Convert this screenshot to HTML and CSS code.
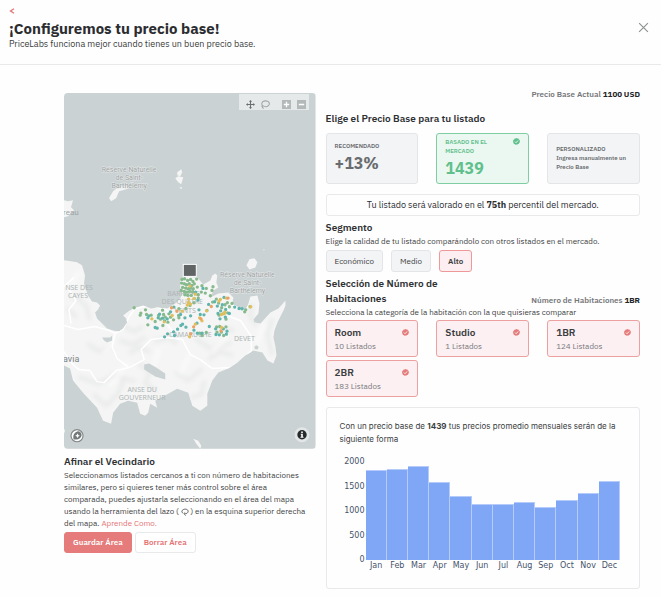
FILE: index.html
```html
<!DOCTYPE html>
<html lang="es">
<head>
    <meta charset="UTF-8">
    <meta name="viewport" content="width=device-width, initial-scale=1.0">
    <title>¡Configuremos tu precio base!</title>
    <link rel="stylesheet" href="styles.css">
</head>
<body>
    <!-- símbolos reutilizados -->
    <svg class="sprite" aria-hidden="true">
        <symbol id="check" viewBox="0 0 16 16">
            <path fill="currentColor" d="M8 0l2 1.3 2.4-.1 1 2.2 2.1 1.2-.3 2.4.8 2.2-1.7 1.7-.6 2.4-2.4.5L9.5 15.5 8 15l-2.2.7-1.7-1.7-2.4-.6-.5-2.4L0 9l.6-2.3L.5 4.4l2.2-1L3.9 1.3l2.3.1z"/>
            <path fill="none" stroke="#fff" stroke-width="2" d="M4.5 8.2l2.5 2.5 4.7-5"/>
        </symbol>
    </svg>

    <header class="header">
        <div>
            <a class="back" href="#" aria-label="Volver">
                <svg viewBox="0 0 6 6"><path d="M5 .8L1.500 3 5 5.200"/></svg>
            </a>
            <h1>¡Configuremos tu precio base!</h1>
            <p>PriceLabs funciona mejor cuando tienes un buen precio base.</p>
        </div>
        <button class="close" aria-label="Cerrar">
            <svg viewBox="0 0 10 10"><path d="M1 1l8 8M9 1L1 9"/></svg>
        </button>
    </header>

    <main class="layout">
        <section class="left">
            <div class="map">
                <svg class="map-canvas" viewBox="0 0 251 355">
                    <defs>
                        <filter id="relief"><feGaussianBlur stdDeviation="2"/></filter>
                        <clipPath id="land">
                            <path id="island" d="M0 167L7 168 13 169 18 172 21 182 20 190 24 202 28 208 33 209 36 212 34 216 31 219 33 225 38 230 43 235 49 237 55 238 59 235 63 229 62 225 59 222 64 218 69 215 79 212 87 215 93 214 103 215 111 210 116 205 118 200 116 194 116 187 120 183 133 184 139 191 146 187 148 182 151 180 153 182 152 189 154 194 149 197 146 204 154 200 164 199 169 204 168 210 176 215 181 217 184 210 186 203 193 202 195 210 194 220 189 226 190 229 196 230 206 219 214 215 221 207 221 212 219 217 213 229 210 237 209 244 211 253 212 262 209 270 203 267 198 259 189 257 181 262 173 269 164 275 154 279 148 287 143 300 143 312 136 317 128 312 124 299 113 295 104 300 91 307 93 314 86 310 84 319 81 322 76 320 73 309 64 307 56 310 49 319 47 330 39 327 33 314 19 299 9 287 6 275 0 272z"/>
                        </clipPath>
                    </defs>
                    <rect width="251" height="355" fill="#cad2d3"/>
                    <g fill="#f4f5f4">
                        <use href="#island"/>
                        <path d="M0 107l4 1 5-1-2 7 3 3-6 6-4 1zM46 103l3-5 5-4 8-2 5 2-5 2-7 2-3 7-5 3-2-3zM113 79l4-3 1 3-2 4-3-1zM111 85l3-2 5 1-2 7-3-2zM115 94l3 0-1 2zM182 172l3-6 5-1 3 4-2 5-6 2zM129 345l5 2 3 5-1 3-4-5zM199 156h1v1h-1zM0 335l1 2-1 3z"/>
                    </g>
                    <g clip-path="url(#land)">
                        <g filter="url(#relief)" fill="none" stroke="#e9ebea" stroke-width="4">
                            <path d="M9 202l13 10 4 15M3 215l10 9M58 232l12 6 9-5M55 247l13 4 14-7M65 260l9-6 12 4M23 250l12 8 13-5M14 283l20 7 16-8 22 6M29 300l13 12 12-12 7-17M74 270l12 8-5 12 12 7M111 279l13 8 14-12M90 248l14-4 9 6M131 245l15 10 21-6M144 266l12-8 13 4M126 304l11-3 3-14M193 232l-7-8 2-14M208 225l-5 15 5 22M153 234l17 3"/>
                        </g>
                        <g filter="url(#relief)" fill="none" stroke="#f9faf9" stroke-width="4">
                            <path d="M15 178l-8 15M49 248l-9 12M64 268l-18 25M95 254l-6 20M126 260l-10 20M163 243l-15 14M200 230l-8 20"/>
                        </g>
                        <path d="M80 271l5-1 7 4 9 6 0 6-10-3-11-7zM38 244l8 0 2-2 0 5-5 2-3-2z" fill="#cad2d3"/>
                        <circle cx="192" cy="254" r="2" fill="#cad2d3"/>
                        <g class="road">
                            <path d="M0 193l10-9M3 193l9 14-7 9 2 14M0 232l14 4 17-3 14 4 6 3 8-4 6-13 6-8 13-3 18 4 5 8-4 7 9 11"/>
                            <path d="M51 240l-3 13 5 12 12 9-13 3-6 6-6 6-7-1-7-11-11-1-7-6L0 258"/>
                            <path d="M65 274l15-8-3-10 10-10 16-2 15 2 8 15 10 5 12 9 18-1 13-8 8-9 0-14-11-16-11-4-3-15M168 212l11 4 5-3"/>
                        </g>
                    </g>
                    <g class="place">
                        <text x="65" y="79">Réserve Naturelle</text>
                        <text x="65" y="87">de Saint-</text>
                        <text x="65" y="95">Barthélemy</text>
                        <text x="183" y="184">Réserve Naturelle</text>
                        <text x="183" y="192">de Saint-</text>
                        <text x="183" y="200">Barthélemy</text>
                    </g>
                    <g class="district">
                        <text x="15" y="197">NSE DES</text>
                        <text x="14" y="205">CAYES</text>
                        <text x="119" y="203">BARRIÈRE</text>
                        <text x="118" y="211">DES QUATRE</text>
                        <text x="121" y="220">VENTS</text>
                        <text x="126" y="243">CAMARUCHE</text>
                        <text x="180" y="247">DEVET</text>
                        <text x="78" y="298">ANSE DU</text>
                        <text x="78" y="306">GOUVERNEUR</text>
                    </g>
                    <text class="islet" x="-1" y="122">reau</text>
                    <text class="town" x="-1" y="268">avia</text>
                    <!-- listados del mercado, un color por rango de precio -->
                    <g class="dots" transform="translate(66 172) scale(.3333)">
                        <path stroke="#86b98c" d="M155 42h0M163 40h0M172 45h0M181 42h0M188 48h0M154 53h0M162 55h0M169 58h0M177 55h0M185 60h0M192 55h0M157 66h0M166 68h0M174 70h0M181 68h0M189 70h0M153 75h0M162 78h0M170 80h0M179 78h0M187 79h0M164 88h0M173 90h0M183 90h0M199 41h0M201 65h0M215 61h0M228 69h0M225 83h0M213 80h0M248 64h0M245 75h0M240 91h0M204 88h0M12 127h0M32 143h0M46 133h0M49 147h0M30 149h0M63 149h0M85 150h0M97 134h0M100 147h0M105 155h0M116 145h0M121 155h0M91 161h0M75 168h0M113 170h0M98 180h0M130 163h0M53 178h0M145 150h0M146 130h0M167 129h0M179 120h0M191 112h0M204 98h0M230 135h0M247 110h0M258 101h0M265 113h0M274 127h0M284 118h0M291 112h0M297 124h0M278 145h0M292 142h0M287 161h0M266 149h0M305 114h0M343 139h0M359 124h0M346 133h0M259 184h0M268 183h0M273 200h0M260 200h0M287 184h0M280 210h0M208 203h0M215 210h0M228 201h0M146 157h0M192 99h0"/>
                        <path stroke="#5fb5ad" d="M218 69h0M196 80h0M203 104h0M253 109h0M261 122h0M281 96h0M271 136h0M286 132h0M297 144h0M263 144h0M276 118h0M313 125h0M326 129h0M335 130h0M235 117h0M221 148h0M210 147h0M200 173h0M191 194h0M201 203h0M237 183h0M256 190h0M279 190h0M290 197h0M267 208h0M257 207h0M288 206h0M142 191h0M152 180h0M157 176h0M133 210h0M130 199h0M112 205h0M103 214h0M75 186h0M81 188h0M53 157h0M56 151h0M84 157h0M88 146h0M103 166h0M111 160h0M121 139h0M151 147h0M131 125h0M206 133h0M181 151h0M164 157h0M97 158h0M167 185h0M215 203h0M285 155h0M269 160h0"/>
                        <path stroke="#e0bf5c" d="M179 62h0M195 86h0M191 99h0M174 111h0M181 116h0M171 119h0M65 160h0M102 169h0M126 150h0M175 101h0M270 102h0M288 98h0M282 144h0M266 107h0M273 147h0M283 140h0M156 137h0M195 176h0M208 157h0M229 136h0M361 124h0M274 186h0M178 214h0M215 166h0"/>
                        <path stroke="#eca263" d="M124 127h0M140 137h0M243 123h0M293 98h0M212 160h0M190 184h0M272 196h0M181 205h0"/>
                    </g>
                    <rect x="119" y="171" width="13" height="12" fill="#616465" stroke="#fff"/>
                    <g transform="translate(13 342)">
                        <circle r="6" fill="#fff" stroke="#858b8c" stroke-width="1.2"/>
                        <path fill="#74797a" d="M-3.5 3.5C-3.9 1-3.8-1-2.4-2.400A3.700 3.700 0 1 1 2.900 2.400C1.500 3.700-1 3.900-3.500 3.500z"/>
                        <path fill="#fff" d="M.5-2.300l.8 1.500 1.500.8-1.500.8-.8 1.500-.8-1.500-1.500-.8 1.500-.8z"/>
                    </g>
                    <g transform="translate(237.5 341)">
                        <circle r="7.5" fill="#e2e6e7"/>
                        <circle r="4.7" fill="#262a2b"/>
                        <path fill="#fff" d="M-.8-3.200H.8v1.500H-.8zM-1.300-1H.8v3h.7v1H-1.500V2h.7V0h-.5z"/>
                    </g>
                </svg>
                <div class="map-tools">
                    <button aria-label="Mover">
                        <svg viewBox="0 0 10 10"><path fill="#6b6f70" d="M5 0l1.800 2H5.600v2.400H8V3.200L10 5 8 6.800V5.600H5.600V8h1.200L5 10 3.200 8h1.200V5.600H2v1.200L0 5l2-1.800v1.200h2.400V2H3.200z"/></svg>
                    </button>
                    <button aria-label="Lazo">
                        <svg viewBox="0 0 10 10"><path fill="none" stroke="#a3a8a8" stroke-width="1.2" d="M2.500 7C-.2 5.300.4 1.500 4.500 1S10 3.700 8.800 5.600 5 8 2.500 6.500 1.200 8.700 3 9.500"/></svg>
                    </button>
                    <button class="zoom-in" aria-label="Acercar">
                        <svg viewBox="0 0 10 10"><path fill="#b3b8b8" d="M0 0h10v10H0z"/><path stroke="#fff" stroke-width="1.5" d="M2 5h6M5 2v6"/></svg>
                    </button>
                    <button aria-label="Alejar">
                        <svg viewBox="0 0 10 10"><path fill="#b3b8b8" d="M0 0h10v10H0z"/><path stroke="#fff" stroke-width="1.5" d="M2 5h6"/></svg>
                    </button>
                </div>
            </div>

            <h2>Afinar el Vecindario</h2>
            <p class="help">Seleccionamos listados cercanos a ti con número de habitaciones similares, pero si quieres tener más control sobre el área comparada, puedes ajustarla seleccionando en el área del mapa usando la herramienta del lazo ( <svg class="lasso" viewBox="0 0 10 10"><path d="M2.500 6.500C0 5 1 2 4.500 1.500S9.800 3.500 8.500 5.500 6 7 4.500 6.300 4 8.500 6 9.300"/></svg> ) en la esquina superior derecha del mapa. <a href="#">Aprende Como.</a></p>
            <div class="actions">
                <button class="btn btn-primary">Guardar Área</button>
                <button class="btn btn-outline">Borrar Área</button>
            </div>
        </section>

        <section class="right">
            <p class="current">Precio Base Actual <b>1100 USD</b></p>
            <h2 class="choose">Elige el Precio Base para tu listado</h2>

            <div class="cards prices">
                <button class="card price">
                    <span class="label">RECOMENDADO</span>
                    <span class="value">+13%</span>
                </button>
                <button class="card price active">
                    <span class="label">BASADO EN EL MERCADO</span>
                    <span class="value">1439</span>
                    <svg class="check"><use href="#check"/></svg>
                </button>
                <button class="card price">
                    <span class="label">PERSONALIZADO</span>
                    <span class="label">Ingresa manualmente un Precio Base</span>
                </button>
            </div>

            <p class="notice">Tu listado será valorado en el <b>75th</b> percentil del mercado.</p>

            <h2>Segmento</h2>
            <p class="sub">Elige la calidad de tu listado comparándolo con otros listados en el mercado.</p>
            <div class="segments">
                <button class="segment">Económico</button>
                <button class="segment">Medio</button>
                <button class="segment selected">Alto</button>
            </div>

            <div class="rooms-head">
                <h2>Selección de Número de Habitaciones</h2>
                <p class="current">Número de Habitaciones <b>1BR</b></p>
            </div>
            <p class="sub">Selecciona la categoría de la habitación con la que quisieras comparar</p>

            <div class="cards rooms">
                <button class="card room">
                    <span class="name">Room</span>
                    <span class="count">10 Listados</span>
                    <svg class="check"><use href="#check"/></svg>
                </button>
                <button class="card room">
                    <span class="name">Studio</span>
                    <span class="count">1 Listados</span>
                    <svg class="check"><use href="#check"/></svg>
                </button>
                <button class="card room">
                    <span class="name">1BR</span>
                    <span class="count">124 Listados</span>
                    <svg class="check"><use href="#check"/></svg>
                </button>
                <button class="card room">
                    <span class="name">2BR</span>
                    <span class="count">183 Listados</span>
                    <svg class="check"><use href="#check"/></svg>
                </button>
            </div>

            <div class="panel">
                <p>Con un precio base de <b>1439</b> tus precios promedio mensuales serán de la siguiente forma</p>
                <div class="chart">
                    <div class="y-axis">
                        <span>2000</span><span>1500</span><span>1000</span><span>500</span><span>0</span>
                    </div>
                    <div class="plot">
                        <div class="bars">
                            <i style="height: 91.5%"></i>
                            <i style="height: 93%"></i>
                            <i style="height: 96%"></i>
                            <i style="height: 79.7%"></i>
                            <i style="height: 65.5%"></i>
                            <i style="height: 57.3%"></i>
                            <i style="height: 57.3%"></i>
                            <i style="height: 58.7%"></i>
                            <i style="height: 54.6%"></i>
                            <i style="height: 61.4%"></i>
                            <i style="height: 68.5%"></i>
                            <i style="height: 80.7%"></i>
                        </div>
                        <div class="x-axis">
                            <span>Jan</span><span>Feb</span><span>Mar</span><span>Apr</span><span>May</span><span>Jun</span><span>Jul</span><span>Aug</span><span>Sep</span><span>Oct</span><span>Nov</span><span>Dec</span>
                        </div>
                    </div>
                </div>
            </div>
        </section>
    </main>
</body>
</html>
```
FILE: styles.css
```css
* {
    box-sizing: border-box;
}

body {
    margin: 0;
    font-family: 'IBM Plex Sans', 'Noto Sans', sans-serif;
    font-size: 8px;
    line-height: 12px;
    color: #3b3d40;
    background: #fefefe;
}

h1, h2, p {
    margin: 0;
}

button {
    font: inherit;
    color: inherit;
    padding: 0;
    border: none;
    background: none;
    cursor: pointer;
}

a {
    color: #e57373;
    text-decoration: none;
}

svg {
    display: block;
}

.sprite {
    position: absolute;
    width: 0;
    height: 0;
}

.header {
    display: flex;
    justify-content: space-between;
    align-items: flex-start;
    padding: 8px 12px 14px 9px;
    border-bottom: 1px solid #e8e9ea;
}

.header p {
    font-size: 9px;
}

.back {
    display: block;
    width: 6px;
    padding: 0 0 6px;
}

.back svg {
    width: 6px;
    height: 6px;
    fill: none;
    stroke: #e57373;
    stroke-width: 1.3;
}

.header h1 {
    font-size: 15px;
    line-height: 18px;
    color: #2b2d30;
}

.close {
    margin-top: 14px;
}

.close svg {
    width: 11px;
    height: 11px;
    fill: none;
    stroke: #8d8f91;
}

.layout {
    display: grid;
    grid-template-columns: 4fr 5fr;
    gap: 10px;
    padding: 28px 21px 8px 64px;
}

h2 {
    font-size: 10px;
    line-height: 15px;
    font-weight: 600;
    color: #2f3134;
}

/* mapa */
.map {
    position: relative;
    border-radius: 4px;
    overflow: hidden;
    margin-bottom: 5px;
}

.map-canvas {
    width: 100%;
    height: auto;
    font-family: Roboto, sans-serif;
}

.road {
    fill: none;
    stroke: #fff;
    stroke-width: 1.5;
    stroke-linejoin: round;
}

.place {
    font-size: 7px;
    fill: #9ea4a5;
    stroke: #e6e9e9;
    stroke-width: 1;
    paint-order: stroke;
    text-anchor: middle;
}

.district {
    font-family: 'Noto Sans', sans-serif;
    font-size: 7px;
    fill: #b0b5b6;
    text-anchor: middle;
}

.islet {
    font-size: 8px;
    fill: #9ea4a5;
}

.town {
    font-size: 9px;
    fill: #7f8384;
}

.dots path {
    stroke-width: 10;
    stroke-linecap: round;
}

.map-tools {
    position: absolute;
    top: 1px;
    right: 7px;
    display: flex;
    align-items: center;
    gap: 6px;
    height: 16px;
    padding: 4px 3px 0 7px;
    background: rgba(255, 255, 255, 0.5);
}

.map-tools svg {
    width: 9px;
    height: 9px;
}

.map-tools .zoom-in {
    margin-left: 6px;
}

.help {
    padding-right: 8px;
}

.lasso {
    display: inline-block;
    width: 8px;
    height: 8px;
    vertical-align: middle;
    fill: none;
    stroke: #3b3d40;
}

.actions {
    display: flex;
    gap: 3px;
    margin-top: 3px;
}

.btn {
    height: 21px;
    padding: 0 8px;
    border: 1px solid #e57b7b;
    border-radius: 3px;
    font-weight: 600;
}

.btn-primary {
    background: #e57b7b;
    color: #fff;
}

.btn-outline {
    border-color: #e8e9ea;
    background: #fff;
    color: #e57373;
}

/* precios */
.current {
    font-weight: 600;
    color: #75777a;
    text-align: right;
}

.current b {
    font-weight: 700;
    color: #222427;
}

.right > .current {
    margin-top: -5px;
}

.choose {
    margin: 11px 0 7px;
}

.cards {
    display: grid;
    grid-template-columns: repeat(3, 1fr);
    gap: 3px 18px;
}

.card {
    position: relative;
    display: flex;
    flex-direction: column;
    justify-content: center;
    padding: 0 8px;
    border: 1px solid #e4e5e7;
    border-radius: 3px;
    background: #f3f4f6;
    text-align: left;
}

.price {
    height: 51px;
    color: #696c6f;
}

.price .label {
    font-size: 6px;
    line-height: 9px;
    font-weight: 600;
}

.price .value {
    font-size: 16px;
    line-height: 24px;
    font-weight: 700;
}

.price.active {
    color: #5fc08c;
    border-color: #7fcda3;
    background: #ebf7f1;
}

.price.active .label {
    padding-right: 20px;
}

.check {
    position: absolute;
    top: 4px;
    right: 8px;
    width: 7px;
    height: 7px;
}

.notice {
    margin: 10px 0 4px;
    padding: 4px;
    border: 1px solid #e8e9ea;
    border-radius: 3px;
    font-size: 9px;
    color: #2b2d30;
    text-align: center;
}

.segments {
    display: flex;
    gap: 8px;
    margin: 3px 0 4px;
}

.segment {
    height: 22px;
    padding: 0 8px;
    border: 1px solid #e4e5e7;
    border-radius: 3px;
    background: #f3f4f6;
}

.segment.selected {
    border-color: #e99;
    background: #fdeff1;
    font-weight: 600;
}

.rooms-head {
    display: flex;
    justify-content: space-between;
    align-items: flex-end;
}

.rooms-head h2 {
    width: 45%;
}

.rooms {
    margin-top: 2px;
}

.room {
    height: 37px;
    border-color: #eda0a0;
    background: #fcf0f2;
}

.room .name {
    font-size: 10px;
    line-height: 14px;
    font-weight: 600;
}

.room .count {
    line-height: 12px;
    color: #77797c;
}

.room .check {
    top: 8px;
    color: #e57b7b;
}

/* gráfico */
.panel {
    margin-top: 10px;
    padding: 12px 19px 17px 13px;
    border: 1px solid #e8e9ea;
    border-radius: 3px;
    font-family: Inter, sans-serif;
    line-height: 13px;
}

.chart {
    display: flex;
    gap: 1px;
    margin-top: 16px;
    font-family: 'DejaVu Sans', Verdana, sans-serif;
    line-height: 10px;
    color: #46536b;
}

.y-axis {
    display: flex;
    flex-direction: column;
    justify-content: space-between;
    width: 25px;
    height: 108px;
    margin-top: -5px;
    text-align: right;
}

.plot {
    flex: 1;
}

.bars {
    display: flex;
    align-items: flex-end;
    height: 98px;
}

.bars i {
    flex: 1;
    background: #80a6f6;
    border: 1px solid #b5cbfa;
    border-width: 1px 1px 0 0;
}

.x-axis {
    display: flex;
    padding-top: 1px;
}

.x-axis span {
    flex: 1;
    text-align: center;
}
```
